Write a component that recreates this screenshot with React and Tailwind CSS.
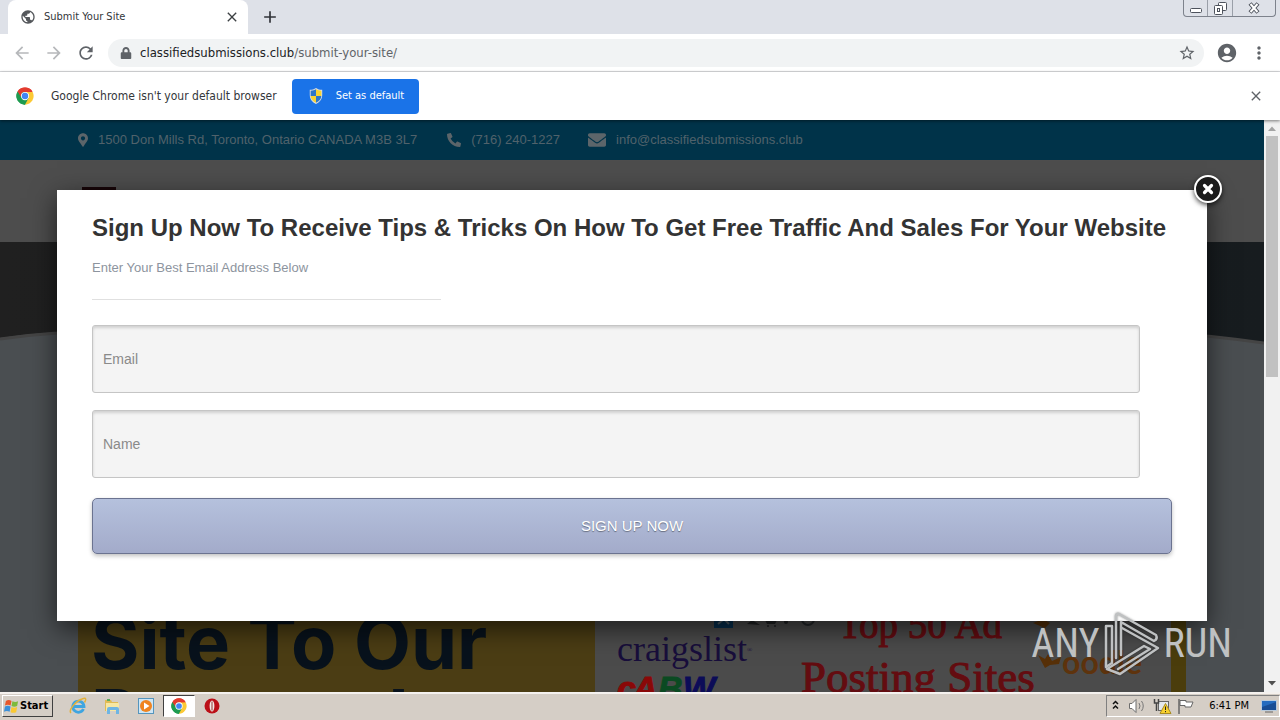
import { FaMapMarkerAlt, FaPhoneAlt, FaEnvelope, FaLock } from 'react-icons/fa';
import { MdAdd, MdArrowBack, MdArrowForward, MdClose, MdMoreVert, MdPublic, MdRefresh, MdStarBorder, MdAccountCircle } from 'react-icons/md';

const ChromeLogo = ({ className }) => (
  <svg viewBox="0 0 48 48" className={className} aria-hidden="true">
    <path d="M24 24 4.1 12.5A23 23 0 0 1 43.9 12.5Z" fill="#e33b2e" />
    <path d="M24 24 43.9 12.5A23 23 0 0 1 24 47Z" fill="#fcc934" />
    <path d="M24 24V47A23 23 0 0 1 4.1 12.5Z" fill="#1e9b50" />
    <path d="M24 13H43.9L33.5 29.5Z" fill="#fcc934" />
    <path d="M33.5 29.5 24 47 14.5 29.5Z" fill="#1e9b50" />
    <path d="M14.5 29.5 4.1 12.5H24Z" fill="#1e9b50" />
    <path d="M4.1 12.5A23 23 0 0 1 43.9 12.5H24A11.5 11.5 0 0 0 14 18.5L14.5 29.5Z" fill="#e33b2e" />
    <path d="M4.1 12.5 14.5 29.5 24 35 24 47A23 23 0 0 1 4.1 12.5Z" fill="#1e9b50" />
    <circle cx="24" cy="24" r="11" fill="#fff" />
    <circle cx="24" cy="24" r="8.6" fill="#4285f4" />
  </svg>
);

const Shield = () => (
  <svg viewBox="0 0 16 18" className="h-4 w-4" aria-hidden="true">
    <path d="M8 0C10 1.5 12.500 2 15 2V8C15 13 12 16 8 18C4 16 1 13 1 8V2C3.500 2 6 1.500 8 0Z" fill="#d9dde2" />
    <path d="M8 1.500V9H2V3C4.500 3 6.500 2.500 8 1.500Z" fill="#2c76c9" />
    <path d="M8 1.500V9H14V3C11.500 3 9.500 2.500 8 1.500Z" fill="#f7d331" />
    <path d="M2 9H8V16.500C4.500 15 2.300 12.500 2 9Z" fill="#f7d331" />
    <path d="M14 9H8V16.500C11.500 15 13.700 12.500 14 9Z" fill="#2c76c9" />
  </svg>
);

const WindowButtons = () => (
  <div className="flex h-[17px] rounded-b border border-t-0 border-[#7d828c] text-[#4d525c]">
    <button aria-label="Minimize" className="flex w-6 items-center justify-center border-r border-[#9a9fa8]">
      <svg viewBox="0 0 12 12" className="h-3 w-3"><rect x="0.5" y="6.500" width="11" height="4" rx="1" fill="#fff" stroke="currentColor" /></svg>
    </button>
    <button aria-label="Restore" className="flex w-[25px] items-center justify-center border-r border-[#9a9fa8]">
      <svg viewBox="0 0 13 13" className="h-[13px] w-[13px]" fill="#fff" stroke="currentColor">
        <rect x="4.500" y="0.500" width="8" height="8" rx="1" />
        <rect x="0.500" y="3.500" width="8" height="9" rx="1" />
        <rect x="3.500" y="6.500" width="2" height="3" />
      </svg>
    </button>
    <button aria-label="Close window" className="flex w-[42px] items-center justify-center">
      <svg viewBox="0 0 12 12" className="h-3 w-3" fill="none">
        <path d="M2 1.500 10 10.500M10 1.500 2 10.500" stroke="currentColor" strokeWidth="4" />
        <path d="M2.500 2 9.500 10M9.500 2 2.500 10" stroke="#fff" strokeWidth="2" />
      </svg>
    </button>
  </div>
);

const TabStrip = () => (
  <div className="flex h-[34px] items-start bg-[#dee1e8]">
    <div className="ml-2 flex h-full w-60 items-center rounded-t-lg bg-white pl-3 pr-2">
      <MdPublic className="h-4 w-4 text-[#55585c]" stroke="currentColor" />
      <span className="ml-2 flex-1 text-[11px] text-[#33363a]">Submit Your Site</span>
      <button aria-label="Close tab"><MdClose className="h-4 w-4 text-[#3c4043]" stroke="currentColor" /></button>
    </div>
    <button aria-label="New tab" className="ml-3 mt-[7px]"><MdAdd className="h-5 w-5 text-[#303338]" stroke="currentColor" /></button>
    <div className="ml-auto mr-1"><WindowButtons /></div>
  </div>
);

const Toolbar = () => (
  <div className="flex h-[38px] items-center border-b border-[#dcdde0] bg-white pl-3 text-[#5f6368]">
    <button aria-label="Back"><MdArrowBack className="h-5 w-5 text-[#b6b8bb]" /></button>
    <button aria-label="Forward" className="ml-3"><MdArrowForward className="h-5 w-5 text-[#b6b8bb]" /></button>
    <button aria-label="Reload" className="ml-3"><MdRefresh className="h-5 w-5" stroke="currentColor" /></button>
    <div className="ml-3 flex h-7 flex-1 items-center rounded-full bg-[#f1f3f4] pl-3 pr-2">
      <FaLock className="h-3 w-3" />
      <span className="ml-2 flex-1 text-[13px]">
        <span className="text-[#202124]">classifiedsubmissions.club</span>/submit-your-site/
      </span>
      <button aria-label="Bookmark"><MdStarBorder className="h-[18px] w-[18px]" /></button>
    </div>
    <button aria-label="Profile" className="ml-3"><MdAccountCircle className="h-[22px] w-[22px]" /></button>
    <button aria-label="Menu" className="mx-[11px]"><MdMoreVert className="h-5 w-5" /></button>
  </div>
);

const DefaultBrowserBar = () => (
  <div className="z-10 flex h-12 items-center bg-white px-4 shadow-[0_1px_3px_rgba(0,0,0,0.5)]">
    <ChromeLogo className="h-[18px] w-[18px]" />
    <span className="ml-[17px] text-xs text-[#33363a]">Google Chrome isn't your default browser</span>
    <button className="ml-[15px] flex h-[35px] w-[127px] items-center rounded bg-[#1a73e8] pl-4 text-[11px] text-white">
      <Shield />
      <span className="ml-3">Set as default</span>
    </button>
    <button aria-label="Dismiss" className="ml-auto"><MdClose className="h-4 w-4 text-[#5f6368]" stroke="currentColor" /></button>
  </div>
);

const ContactBar = () => (
  <div className="flex h-10 items-center bg-[#003349] pl-[78px] text-[13px] text-[#50626b]">
    <FaMapMarkerAlt className="h-4 w-2.5 text-[#5c656a]" />
    <span className="ml-2.5">1500 Don Mills Rd, Toronto, Ontario CANADA M3B 3L7</span>
    <FaPhoneAlt className="ml-[30px] h-3.5 w-3.5 text-[#5c656a]" />
    <span className="ml-2.5">(716) 240-1227</span>
    <FaEnvelope className="ml-7 h-[18px] w-[18px] text-[#5c656a]" />
    <a href="#contact" className="ml-2.5">info@classifiedsubmissions.club</a>
  </div>
);

const AdSitesPicture = () => (
  <svg viewBox="0 0 576 92" className="h-[92px] w-[576px] bg-[#4b4b4b]" role="img" aria-label="Ad posting sites">
    <rect x="119" y="14" width="19" height="14" fill="#08304f" />
    <path d="M123 24 129 19 134 24" stroke="#53606a" strokeWidth="2" fill="none" />
    <g fill="#202224">
      <path d="M152 24 157 20 165 25Z" />
      <path d="M170 20H182L180 24H172Z" />
      <circle cx="173" cy="26" r="1" />
      <circle cx="180" cy="26" r="1" />
      <circle cx="191" cy="22" r="2" />
    </g>
    <circle cx="213" cy="19" r="6" fill="none" stroke="#25282b" strokeWidth="2" />
    <text x="22" y="61" fontSize="36" fontFamily="Liberation Serif, serif" fill="#180e3b">craigslist</text>
    <text x="152" y="52" fontSize="7" fontFamily="Liberation Serif, serif" fill="#180e3b">®</text>
    <g fontFamily="Liberation Sans, sans-serif" fontWeight="700" fontStyle="italic" fontSize="34" strokeWidth="1">
      <text x="22" y="100" fill="#8a0808" stroke="#8a0808">c</text>
      <text x="38" y="100" fill="#8a0808" stroke="#8a0808">A</text>
      <text x="63" y="100" fill="#0b4a22" stroke="#0b4a22">B</text>
      <text x="88" y="100" fill="#0c0c58" stroke="#0c0c58">W</text>
    </g>
    <g fontFamily="Liberation Serif, serif" fill="#640c10" stroke="#640c10">
      <text x="243" y="38" fontSize="39">Top 50 Ad</text>
      <text x="206" y="92" fontSize="45">Posting Sites</text>
    </g>
    <path d="M438 23 448 19 455 23 450 28ZM443 55 450 59 453 54 457 61 466 57 464 64 455 65 450 68Z" fill="#573008" />
    <text x="467" y="74" fontSize="32" fontWeight="700" fontFamily="Lato, sans-serif" fill="#5e330d">oodle</text>
  </svg>
);

const SitePage = () => (
  <div className="flex h-full flex-col overflow-hidden bg-[#4a4e51]">
    <ContactBar />
    <header className="flex h-[82px] shrink-0 items-start bg-[#4d4d4d] pl-[82px] pt-[27px]">
      <div className="h-[3px] w-[34px] bg-[#170508]" />
    </header>
    <svg viewBox="0 0 1264 110" preserveAspectRatio="none" className="h-[110px] w-full shrink-0" aria-hidden="true">
      <defs>
        <linearGradient id="hero">
          <stop offset="0" stopColor="#202020" />
          <stop offset="1" stopColor="#171c1f" />
        </linearGradient>
      </defs>
      <path d="M0 0H1264V101Q1235 96 1207 94Q632 -10 57 90Q28 92 0 96Z" fill="url(#hero)" />
      <path d="M0 97Q28 93 57 91Q632 -10 1207 94Q1235 97 1264 101" fill="none" stroke="#444" strokeWidth="3" />
    </svg>
    <main className="flex flex-1 items-end pl-[78px]">
      <h1 className="flex h-[92px] w-[517px] shrink-0 flex-col bg-[#4b3d14] pl-[13px] pt-[5px] font-[Inter,sans-serif] text-[74px] font-bold leading-[74px] text-[#08121c]">
        <span>Site To Our</span>
        <span>Personal</span>
      </h1>
      <AdSitesPicture />
      <div className="h-[92px] w-[15px] bg-[#4b3d0c]" />
    </main>
  </div>
);

const SignUpModal = () => (
  <section role="dialog" aria-label="Sign up" className="absolute inset-x-[57px] top-[70px] bg-white px-[35px] pb-[67px] pt-[22px] shadow-[0_8px_25px_rgba(0,0,0,0.6)]">
    <button aria-label="Close" className="absolute -right-[15px] -top-[15px] flex h-7 w-7 items-center justify-center rounded-full border-2 border-white bg-[#1b1b1b] shadow-[0_2px_5px_rgba(0,0,0,0.7)]">
      <svg viewBox="0 0 12 12" className="h-3 w-3"><path d="M2.500 2.500 9.500 9.500M9.500 2.500 2.500 9.500" stroke="#fff" strokeWidth="3.200" strokeLinecap="round" /></svg>
    </button>
    <h2 className="whitespace-nowrap text-2xl font-bold leading-8 text-[#333]">
      Sign Up Now To Receive Tips &amp; Tricks On How To Get Free Traffic And Sales For Your Website
    </h2>
    <p className="mt-3 text-[13px] leading-6 text-[#8d949e]">Enter Your Best Email Address Below</p>
    <hr className="mt-[19px] w-[349px] border-[#e0e0e0]" />
    <form className="mt-[25px] flex flex-col" onSubmit={(e) => e.preventDefault()}>
      <input type="email" aria-label="Email" placeholder="Email" className="mr-8 h-[68px] rounded-[3px] border border-[#c5c5c5] bg-[#f4f4f4] px-2.5 text-sm shadow-[inset_0_2px_3px_rgba(0,0,0,0.15)] placeholder:text-[#8a8a8a]" />
      <input type="text" aria-label="Name" placeholder="Name" className="mr-8 mt-[17px] h-[68px] rounded-[3px] border border-[#c5c5c5] bg-[#f4f4f4] px-2.5 text-sm shadow-[inset_0_2px_3px_rgba(0,0,0,0.15)] placeholder:text-[#8a8a8a]" />
      <button className="mt-5 h-14 rounded-[5px] border border-[#6b7390] bg-linear-to-b from-[#b5c1dd] to-[#a3abca] text-[15px] text-white shadow-[0_2px_4px_rgba(0,0,0,0.25)] [text-shadow:0_1px_1px_rgba(0,0,0,0.4)]">
        SIGN UP NOW
      </button>
    </form>
  </section>
);

const Scrollbar = () => (
  <div className="flex w-4 shrink-0 flex-col items-center bg-[#f1f1f1]">
    <svg viewBox="0 0 16 16" className="h-4 w-4"><path d="M4 11 8 6.500 12 11Z" fill="#a3a3a3" /></svg>
    <div className="h-[241px] w-3 bg-[#c1c1c1]" />
    <svg viewBox="0 0 16 16" className="mt-auto h-4 w-4"><path d="M4 5 12 5 8 9.500Z" fill="#505050" /></svg>
  </div>
);

const Watermark = () => (
  <div className="absolute bottom-11 right-12 flex items-center gap-1 font-['Roboto_Condensed',Roboto,sans-serif] text-[40px] leading-[64px] text-[#bfc1c2]">
    <span>ANY</span>
    <svg viewBox="0 0 56 64" className="h-16 w-14 drop-shadow-[0_0_1px_rgba(0,0,0,0.4)]" fill="none" stroke="currentColor" strokeWidth="2.500" strokeLinejoin="round" strokeLinecap="round">
      <path d="M2 14H8V51L2 55Z" />
      <path d="M12 46V4Q12 1 15 2L52 23Q54 27 50 29L17 10V43" />
      <path d="M18 16 54 36 16 62 3 57 40 34 46 37 14 57" />
    </svg>
    <span>RUN</span>
  </div>
);

const WindowsFlag = () => (
  <svg viewBox="0 0 16 16" className="h-[15px] w-[15px]" aria-hidden="true">
    <path d="M2 2Q5 0 8 2L7 7Q4 5.500 1 7Z" fill="#e8572a" />
    <path d="M9 2.500Q12 4 15 2.500L14 7.500Q11 9 8 7.500Z" fill="#7dba3c" />
    <path d="M1 8Q4 6.500 7 8L6 13.500Q3 12 0 13.500Z" fill="#3c8fd8" />
    <path d="M8 8.500Q11 10 14 8.500L13 14Q10 15.500 7 14Z" fill="#fac832" />
  </svg>
);

const ExplorerIcon = () => (
  <svg viewBox="0 0 18 18" className="h-[18px] w-[18px]" aria-hidden="true">
    <path d="M14.500 12A5.600 5.600 0 1 1 15 9.500H5" fill="none" stroke="#3fa5e0" strokeWidth="2.800" />
    <path d="M2 16C-1 13 7 4 13 2C18 0 17 3 15.500 5.500" fill="none" stroke="#e3b23b" strokeWidth="1.500" />
  </svg>
);

const FolderIcon = () => (
  <svg viewBox="0 0 18 18" className="h-[18px] w-[18px]" aria-hidden="true">
    <path d="M2 3H8L9 5H15V14H2Z" fill="#e0bb55" />
    <path d="M3 6H16V14H3Z" fill="#f7e7a2" />
    <path d="M4 3H7" stroke="#5cac5f" strokeWidth="2" />
    <path d="M4 17V12Q4 10 6 10H14Q16 10 16 12V17H13V13H7V17Z" fill="#6fb5e3" />
  </svg>
);

const PlayerIcon = () => (
  <svg viewBox="0 0 18 18" className="h-[18px] w-[18px]" aria-hidden="true">
    <rect x="1.500" y="1.500" width="15" height="15" fill="#cfe6f5" stroke="#5595bd" />
    <circle cx="9" cy="9" r="6" fill="#ef8420" />
    <path d="M7 5.500 12.500 9 7 12.500Z" fill="#fff" />
  </svg>
);

const OperaIcon = () => (
  <svg viewBox="0 0 18 18" className="h-[18px] w-[18px]" aria-hidden="true">
    <circle cx="9" cy="9" r="7.500" fill="#bb1018" />
    <ellipse cx="9" cy="9" rx="2.400" ry="5.500" fill="#f3e9e5" />
    <path d="M9 4.500V13.500" stroke="#8d3435" />
  </svg>
);

const TrayIcons = () => (
  <svg viewBox="0 0 84 18" className="h-[18px] w-[84px]" aria-hidden="true" fill="none">
    <path d="M2 7 4.500 4.500 7 7M2 11.500 4.500 9 7 11.500" stroke="#111" strokeWidth="1.500" />
    <path d="M18.500 6.500H21L25 2.500V15.500L21 11.500H18.500Z" fill="#fff" stroke="#6d6d6d" />
    <path d="M28 6Q30 9 28 12M30.500 4Q34 9 30.500 14" stroke="#777" />
    <rect x="47.500" y="4.500" width="10" height="9" fill="#e4e8ec" stroke="#666" />
    <path d="M43.500 2V6H47.500V2M45.500 6V14" stroke="#444" strokeWidth="1.500" />
    <path d="M54.500 6.500 60 16.500H49Z" fill="#f8d02f" stroke="#a98c20" />
    <path d="M54.500 9.500V13M54.500 14V15.200" stroke="#222" />
    <path d="M68 2V17" stroke="#666" strokeWidth="1.500" />
    <path d="M69 3.500H75V5H82L80 10H74V8.500H69Z" fill="#fff" stroke="#666" />
  </svg>
);

const Taskbar = () => (
  <footer className="flex h-7 shrink-0 items-center bg-[#d5cec6] pl-0.5 shadow-[inset_0_2px_0_#f4f1ee]">
    <button className="flex h-[22px] items-center border border-b-[#404040] border-l-white border-r-[#404040] border-t-white pl-px pr-1 text-[11px] font-bold text-black">
      <WindowsFlag />
      <span className="ml-px">Start</span>
    </button>
    <nav aria-label="Quick launch" className="ml-4 flex items-center gap-4">
      <button aria-label="Internet Explorer"><ExplorerIcon /></button>
      <button aria-label="File Explorer"><FolderIcon /></button>
      <button aria-label="Media Player"><PlayerIcon /></button>
    </nav>
    <button aria-label="Chrome" className="ml-2 flex h-[22px] w-8 items-center justify-center border border-b-white border-l-[#404040] border-r-white border-t-[#404040] bg-white">
      <ChromeLogo className="h-4 w-4" />
    </button>
    <button aria-label="Opera" className="ml-2"><OperaIcon /></button>
    <div className="ml-auto flex h-[22px] items-center border border-b-white border-l-[#808080] border-r-white border-t-[#808080] pl-1 pr-0.5">
      <TrayIcons />
      <time className="ml-3.5 text-[11px] text-black">6:41 PM</time>
      <svg viewBox="0 0 16 14" className="ml-3 h-3.5 w-4" aria-hidden="true">
        <rect x="0.500" y="1.500" width="15" height="10" fill="#246cc0" stroke="#b9cbdc" />
        <path d="M1 8 15 3V11H1Z" fill="#174d95" />
        <path d="M4 13H12" stroke="#666" />
      </svg>
    </div>
  </footer>
);

export default function App() {
  return (
    <div className="relative flex h-screen flex-col overflow-hidden font-['DejaVu_Sans_Condensed','Noto_Sans',sans-serif]">
      <TabStrip />
      <Toolbar />
      <DefaultBrowserBar />
      <div className="flex min-h-0 flex-1">
        <div className="relative min-w-0 flex-1 font-['Liberation_Sans',Arial,sans-serif]">
          <SitePage />
          <SignUpModal />
        </div>
        <Scrollbar />
      </div>
      <Taskbar />
      <Watermark />
    </div>
  );
}
